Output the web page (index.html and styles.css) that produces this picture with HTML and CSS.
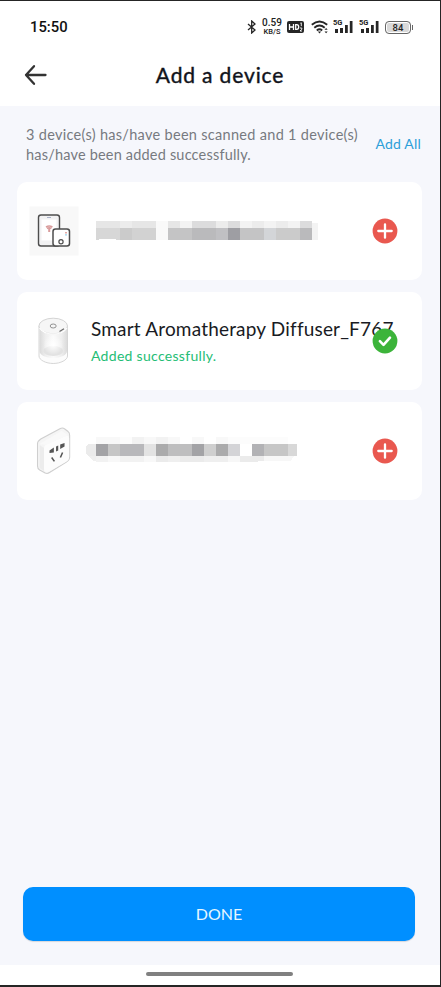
FILE: index.html
```html
<!DOCTYPE html>
<html lang="en">
<head>
<meta charset="utf-8">
<meta name="viewport" content="width=device-width, initial-scale=1">
<title>Add a device</title>
<link rel="stylesheet" href="styles.css">
</head>
<body>
<div class="screen">
  <div class="status">
    <span class="time">15:50</span>
    <div class="status-icons">
      <svg class="bt" width="10" height="14" viewBox="0 0 10 14"><path d="M1 4l7 6-3.3 3V1L8 4l-7 6"/></svg>
      <div class="speed"><span>0.59</span><small>KB/S</small></div>
      <svg class="hd" width="17" height="12" viewBox="0 0 17 12"><rect width="17" height="12" rx="2" fill="#262626"/><path d="M2.5 3v6M6.5 3v6M2.5 6h4M8.7 3.6h1q2 0 2 2.4t-2 2.4h-1z" fill="none" stroke="#fff" stroke-width="1.3"/><path d="M13.4 2.2l.9-.4v3.4M13 7h1.8v1.2L13 10h2" fill="none" stroke="#fff" stroke-width=".9"/></svg>
      <svg class="wifi" width="18" height="14" viewBox="0 0 18 14"><g fill="none" stroke="#262626" stroke-width="1.9"><path d="M.8 4.7q7.7-6.5 15.4 0M3.3 7.7q5.2-4.3 10.4 0M5.8 10.4q2.7-2.2 5.4 0"/></g><path d="M6.8 11.6h3.4l-1.7 2zM13.5 9.8l1.6-1.9 1.6 1.9zM13.5 11.4l1.6 1.9 1.6-1.9z" fill="#262626"/></svg>
      <div class="signal"><b>5G</b><svg width="20" height="14" viewBox="0 0 20 14"><path d="M2 9h3v4H2zM7 8h3v5H7zM12 5h2.8v8H12zM16.8 1h2.7v12h-2.7z"/></svg></div>
      <div class="signal"><b>5G</b><svg width="20" height="14" viewBox="0 0 20 14"><path d="M2 9h3v4H2zM7 8h3v5H7zM12 5h2.8v8H12zM16.8 1h2.7v12h-2.7z"/></svg></div>
      <div class="battery">84</div>
    </div>
  </div>
  <header class="header">
    <svg class="back" width="24" height="22" viewBox="0 0 24 22"><path d="M21.5 11H2M10 2.2L2 11l8 8.8"/></svg>
    <h1>Add a device</h1>
  </header>
  <main>
    <div class="summary">
      <p><span class="line-a">3 device(s) has/have been scanned and 1 device(s)</span><br><span class="line-b">has/have been added successfully.</span></p>
      <a class="add-all">Add All</a>
    </div>
    <section class="cards">
      <article class="card">
        <svg class="thumb" width="50" height="50" viewBox="0 0 50 50">
          <rect width="49" height="49" x=".5" y=".5" fill="#f8f8f8"/>
          <rect x="9.5" y="9" width="21" height="31" rx="2.5" fill="#f2f2f3" stroke="#4d4d4d" stroke-width="1.4"/>
          <path d="M12.5 13.5h15v21h-15z" fill="#fff"/><path d="M18 11.5h4" stroke="#aab2c8"/>
          <path d="M17 21q3.2-2 6.4 0M18 22.5q2.2-1.4 4.4 0" fill="none" stroke="#d99c9c" stroke-width="1.5"/><path d="M20.2 22v4" stroke="#d99c9c" stroke-width="2"/>
          <rect x="24" y="23" width="16.5" height="17" rx="2.5" fill="#fff" stroke="#4d4d4d" stroke-width="1.5"/>
          <circle cx="32" cy="35.8" r="2.1" fill="#fff" stroke="#4d4d4d" stroke-width="1.2"/>
          <path d="M36 26h2v1.6h-2z" fill="#e5a8a5"/><path d="M36 28.2h2v1.4h-2z" fill="#9bd6ee"/>
        </svg>
        <svg class="redacted" width="240" height="30" viewBox="0 0 240 30" shape-rendering="crispEdges">
          <g transform="translate(10 5)">
            <path fill="#e6e6e6" d="M0 0h24v7H0zM36 0h24v7H36z"/><path fill="#ececec" d="M24 0h12v7H24zM120 0h12v7h-12zM156 0h12v7h-12zM180 0h12v7h-12z"/><path fill="#f9f9f9" d="M60 0h12v19H60z"/><path fill="#e6e6e6" d="M72 0h12v7H72zM108 0h12v7h-12z"/><path fill="#f3f3f3" d="M84 0h12v7H84zM144 0h12v7h-12zM168 0h12v7h-12zM192 0h12v7h-12zM216 2h6v17h-6z"/><path fill="#dcdcdd" d="M96 0h24v7H96zM132 0h12v7h-12zM204 0h12v7h-12z"/>
            <path fill="#d7d7d7" d="M0 7h24v12H20v-1H3v1H0z"/><path fill="#cbcbcb" d="M24 7h12v12H24zM180 7h24v12h-24z"/><path fill="#d2d2d2" d="M36 7h24v12H36z"/><path fill="#c4c4c5" d="M72 7h24v12H72zM144 7h24v12h-24z"/><path fill="#bababc" d="M96 7h24v12H96zM204 7h12v12h-12z"/><path fill="#c0c0c3" d="M120 7h12v12h-12z"/><path fill="#9e9ea3" d="M132 7h12v12h-12z"/><path fill="#d3d5d8" d="M168 7h12v12h-12z"/>
          </g>
        </svg>
        <svg class="action" width="26" height="26" viewBox="0 0 26 26"><circle cx="13" cy="13" r="12.4" fill="#e9584f"/><path d="M13 6.3v13.4M6.3 13h13.4" stroke="#fff" stroke-width="2.3" stroke-linecap="round"/></svg>
      </article>
      <article class="card">
        <svg class="thumb" width="50" height="50" viewBox="0 0 50 50">
          <defs><linearGradient id="glass"><stop stop-color="#dadada"/><stop offset=".22" stop-color="#eee"/><stop offset=".5" stop-color="#fafafa"/><stop offset=".8" stop-color="#eee"/><stop offset="1" stop-color="#dbdbdb"/></linearGradient><radialGradient id="glow"><stop stop-color="#fff"/><stop offset="1" stop-color="#fff" stop-opacity="0"/></radialGradient></defs>
          <path d="M10 10v30c0 4 7 7.5 14.2 7.5S38.5 44 38.5 40V10z" fill="#fcfcfc" stroke="#d6d6d6"/>
          <path d="M10.5 10v25c0 4 6 7 13.7 7s13.8-3 13.8-7V10z" fill="url(#glass)"/>
          <ellipse cx="24.2" cy="35" rx="10" ry="5" fill="#e2e2e2"/><ellipse cx="24.2" cy="29" rx="10" ry="10" fill="url(#glow)"/>
          <ellipse cx="24.2" cy="10" rx="14.3" ry="7.8" fill="#f6f6f6" stroke="#d4d4d4"/>
          <path d="M10.5 12q4 6 13.7 6T38 12" fill="none" stroke="#fff" stroke-width="1.2"/>
          <ellipse cx="24.2" cy="10" rx="3" ry="2" fill="none" stroke="#888" stroke-width=".9"/><path d="M30.5 15.5l4.5-2.7" stroke="#666" stroke-width="1.2"/>
        </svg>
        <div class="info"><h2>Smart Aromatherapy Diffuser_F767</h2><p>Added successfully.</p></div>
        <svg class="action" width="26" height="26" viewBox="0 0 26 26"><circle cx="13" cy="13" r="12.4" fill="#3cb43a"/><path d="M7.9 13.2l3.6 3.6 6.5-7.2" fill="none" stroke="#fff" stroke-width="2.6" stroke-linecap="round" stroke-linejoin="round"/></svg>
      </article>
      <article class="card">
        <svg class="thumb" width="50" height="50" viewBox="0 0 50 50">
          <g transform="translate(-1.3 0) scale(1.09 1)">
            <path d="M9 18q0-3 3-5L30 2.5q2-1 4 .5l3 2.5q1.5 1 1.5 4V31q0 3-3 5L20 46.5q-2 1.5-4 .5l-5-3Q9 43 9 40z" fill="#f5f5f5" stroke="#cfcfcf"/>
            <path d="M11 19l4 3v23l-4-3z" fill="#ececec"/><path d="M15 22q0-3 3-4l17-8q3-1 3 2v19q0 3-3 5L19 46q-4 1-4-3z" fill="#fcfcfc"/>
            <path d="M11 18L31 5l6 4-20 10z" fill="#f9f9f9"/>
            <path d="M20 24.5l4-3v5l-4 .4zM26 20.4l2-.8v5l-2 .8zM29.8 18.5l4-1.5v3.4l-4 2.5z" fill="#555"/><path d="M22 31.5l2.5 3.8M32 26.5l-2 5" stroke="#555" stroke-width="1.4"/>
          </g>
        </svg>
        <svg class="redacted" width="240" height="30" viewBox="0 0 240 30" shape-rendering="crispEdges">
          <g transform="translate(10 -4)">
            <path fill="#f8f8f8" d="M0 5h24v7H0zM48 5h12v7H48zM72 5h12v7H72zM96 5h12v7H96zM120 5h12v7h-12zM12 24h12v6H12zM48 24h12v6H48z"/><path fill="#f2f2f2" d="M36 5h12v7H36zM60 5h12v7H60zM24 24h24v6H24zM0 24h12v6H0z"/><path fill="#fcfcfc" d="M24 5h12v7H24zM132 5h60v7h-60z"/>
            <path fill="#ebebeb" d="M-10 14l2-2h8v12h-8l-2-2zM60 24h12v6H60zM84 24h24v6H84zM144 24h24v5l-12 1h-12z"/><path fill="#efefef" d="M-8 24h8v5h-3zM72 24h12v6H72zM108 24h24v6h-24z"/><path fill="#f7f7f7" d="M132 24h12v6h-12zM168 24h30l-3 5h-27z"/>
            <path fill="#a3a3a6" d="M0 12h12v12H0zM96 12h12v12H96z"/><path fill="#c6c6c6" d="M12 12h12v12H12zM168 12h24v12h-24z"/><path fill="#b8b8bb" d="M24 12h24v12H24z"/><path fill="#e3e3e3" d="M48 12h12v12H48z"/><path fill="#ababac" d="M60 12h12v12H60zM120 12h12v12h-12z"/><path fill="#bebebf" d="M72 12h24v12H72z"/><path fill="#cfcfcf" d="M108 12h12v12h-12z"/><path fill="#d4d4d7" d="M132 12h12v12h-12z"/><path fill="#b2b2b5" d="M156 12h12v12h-12z"/><path fill="#d8d8d8" d="M192 12h9v12h-9z"/>
          </g>
        </svg>
        <svg class="action" width="26" height="26" viewBox="0 0 26 26"><circle cx="13" cy="13" r="12.4" fill="#e9584f"/><path d="M13 6.3v13.4M6.3 13h13.4" stroke="#fff" stroke-width="2.3" stroke-linecap="round"/></svg>
      </article>
    </section>
    <button class="done">DONE</button>
  </main>
  <footer class="nav"><span></span></footer>
</div>
</body>
</html>
```

FILE: styles.css
```css
* { box-sizing: border-box; margin: 0; padding: 0; }
body { font-family: Lato, sans-serif; background: #fff; }
.screen { width: 441px; height: 987px; display: flex; flex-direction: column; overflow: hidden; border: solid #252525; border-width: 1px 1px 2px 0; background: #fff; }
.status { height: 44px; display: flex; align-items: center; justify-content: space-between; padding: 8px 28px 0 30px; }
.time { font: 500 14.8px/18px Roboto, sans-serif; color: #111; }
.status-icons { display: flex; align-items: center; height: 18px; }
.bt { fill: none; stroke: #262626; stroke-width: 1.3; margin-right: 4px; }
.speed { width: 22px; font: 500 10px/10px Roboto, sans-serif; color: #222; display: flex; flex-direction: column; align-items: center; margin-right: 4px; }
.speed span { line-height: 9.5px; }
.speed small { font-size: 7.5px; line-height: 8px; }
.hd { margin-right: 7px; }
.wifi { margin-right: 4px; }
.signal { position: relative; width: 20px; height: 14px; margin-right: 6px; }
.signal svg { display: block; fill: #262626; }
.signal b { position: absolute; left: 0; top: -1px; font: 700 7.5px/8px Roboto, sans-serif; color: #222; background: #fff; }
.battery { position: relative; width: 26px; height: 13px; border: 1px solid #666; border-radius: 4px; background: #d9d9d9; box-shadow: inset 0 0 0 1px #fff; font: 500 9.5px/11px Roboto, sans-serif; color: #222; text-align: center; margin-right: 1px; }
.battery::after { content: ""; position: absolute; right: -3px; top: 3px; width: 1px; height: 5px; background: #666; }
.header { height: 61px; display: grid; grid-template-columns: 24px 1fr 24px; align-items: center; padding: 0 24px 2px; }
.back { fill: none; stroke: #333; stroke-width: 2.3; stroke-linecap: round; stroke-linejoin: round; }
h1 { font-size: 21px; line-height: 26px; font-weight: 400; color: #10131a; text-align: center; letter-spacing: .85px; -webkit-text-stroke: .4px #10131a; }
main { flex: 1; background: #f6f7fc; display: flex; flex-direction: column; padding: 19px 18px 24px 17px; }
.summary { display: flex; align-items: center; justify-content: space-between; height: 40px; padding-left: 9px; color: #777a80; }
.summary p { font-size: 14.5px; line-height: 20px; white-space: nowrap; }
.line-a { letter-spacing: .3px; }
.line-b { letter-spacing: .19px; }
.add-all { font-size: 14px; color: #2d9fd9; letter-spacing: .2px; white-space: nowrap; margin: -3px 1px 0 0; }
.cards { display: grid; gap: 12px; margin-top: 17px; }
.card { position: relative; height: 98px; border-radius: 10px; background: #fff; display: flex; align-items: center; padding-left: 12px; }
.thumb { flex: none; }
.redacted { margin-left: 7px; }
.action { position: absolute; right: 24px; top: 36px; }
.info { margin-left: 12px; white-space: nowrap; }
h2 { font-size: 19px; line-height: 26px; font-weight: 400; color: #191b23; letter-spacing: .18px; }
.info p { font-size: 14px; line-height: 20px; color: #24bd75; letter-spacing: .3px; margin-top: 4px; }
.done { height: 54px; margin: auto 7px 0 6px; border: 0; border-radius: 10px; background: #008fff; color: #e5f7ff; font: 400 16px/24px Lato, sans-serif; box-shadow: 0 1px 1px #0002; }
.nav { height: 20px; display: flex; justify-content: center; padding: 7px 2px 0 0; background: #fff; }
.nav span { width: 147px; height: 4px; border-radius: 2px; background: #808080; }
```
